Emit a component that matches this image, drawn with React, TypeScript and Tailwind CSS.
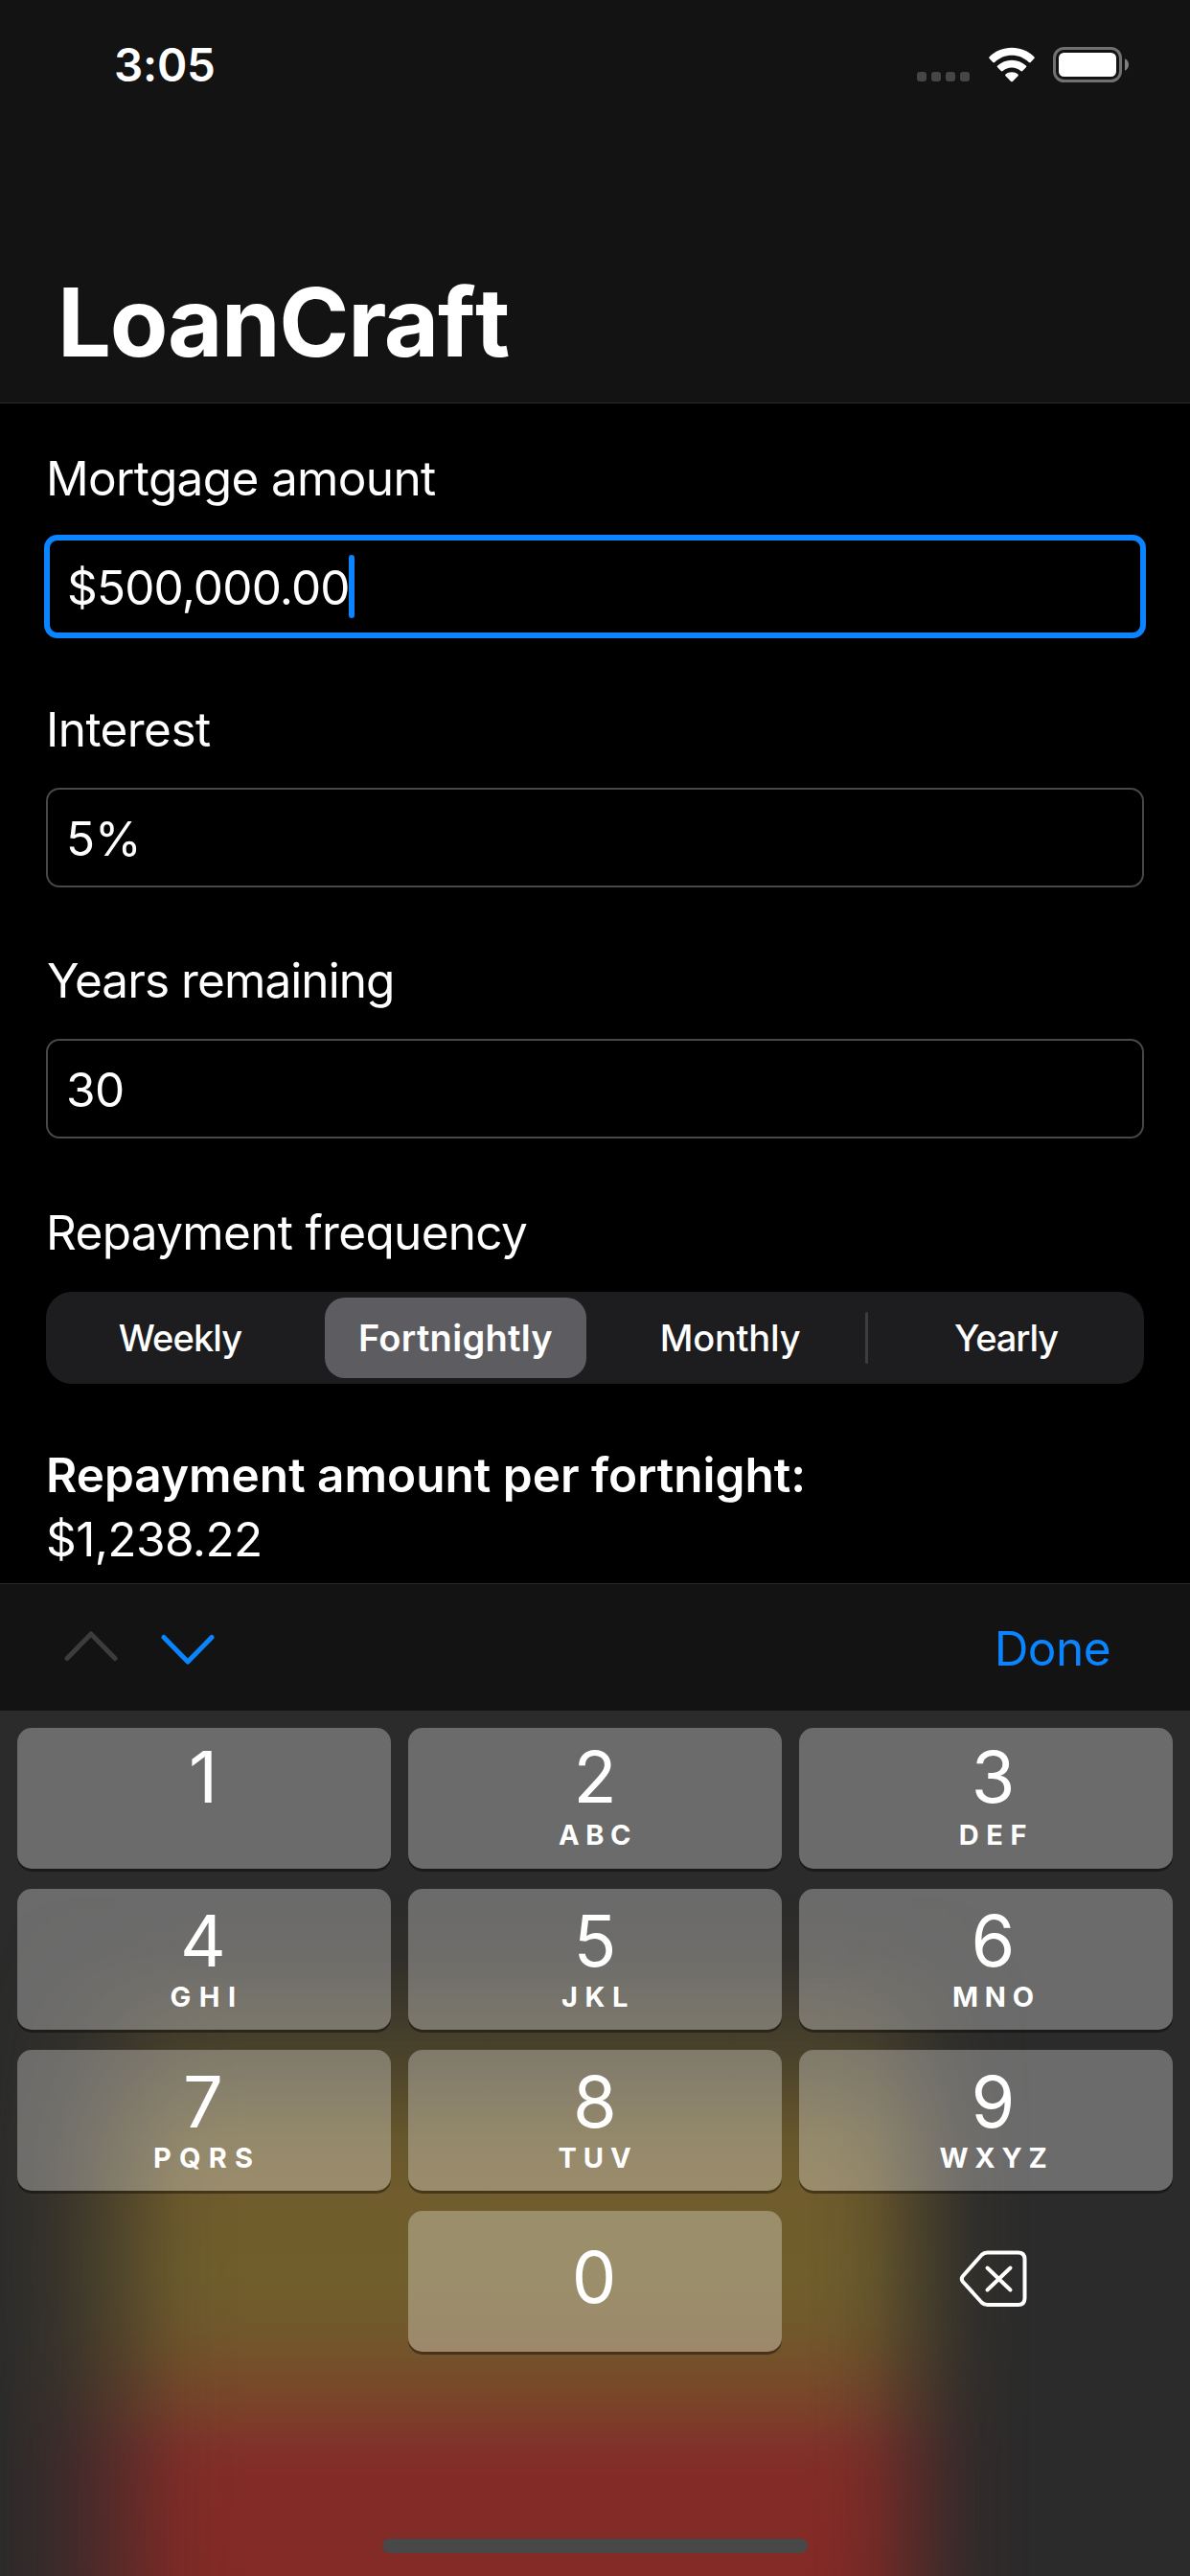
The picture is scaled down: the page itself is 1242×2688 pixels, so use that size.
import type { ReactNode } from "react";

type FieldProps = {
  label: string;
  labelClass: string;
  value: string;
  valueClass: string;
  focused?: boolean;
};

type KeyData = {
  digit: string;
  letters?: string;
  tracking?: string;
};

function StatusBar() {
  return (
    <div className="flex h-[132px] items-start justify-between pt-[38px] pr-[62px] pl-[119px]">
      <span className="text-[47.5px] leading-[60px] font-semibold tracking-[-0.23px]">3:05</span>
      <div className="flex items-start">
        <div className="mt-[37px] flex gap-[5px]">
          {[0, 1, 2, 3].map((dot) => (
            <span key={dot} className="h-[10px] w-[10px] rounded-[3px] bg-[#464646]" />
          ))}
        </div>
        <svg className="mt-[11px] ml-[19px]" width="50" height="37" viewBox="0 0 50 37" fill="white">
          <path d="M25 0.7C34 0.7 42.300 4.200 48.300 10.200C48.900 10.800 48.900 11.500 48.400 12.100L44.700 15.900C44.100 16.500 43.400 16.400 42.800 15.900C38 11.300 31.800 8.700 25 8.700C18.200 8.700 12 11.300 7.200 15.900C6.600 16.400 5.900 16.500 5.300 15.900L1.600 12.100C1.100 11.500 1.100 10.800 1.700 10.200C7.700 4.200 16 0.700 25 0.700Z" />
          <path d="M25 13.700C30.700 13.700 36 15.900 39.900 19.500C40.500 20.100 40.500 20.700 39.900 21.300L36.200 25C35.600 25.600 34.900 25.500 34.300 25C31.800 22.800 28.500 21.500 25 21.500C21.500 21.500 18.200 22.800 15.700 25C15.100 25.500 14.400 25.600 13.800 25L10.100 21.300C9.500 20.700 9.500 20.100 10.100 19.500C14 15.900 19.300 13.700 25 13.700Z" />
          <path d="M25 26.300C27.500 26.300 29.700 27.100 31.400 28.500C32 29 32 29.700 31.500 30.200L25.900 35.900C25.300 36.500 24.700 36.500 24.100 35.900L18.500 30.200C18 29.700 18 29 18.600 28.500C20.300 27.100 22.500 26.300 25 26.300Z" />
        </svg>
        <svg className="mt-[11px] ml-[18px]" width="81" height="38" viewBox="0 0 81 38">
          <rect x="1.500" y="1.500" width="69" height="34" rx="10" fill="none" stroke="#717171" strokeWidth="3" />
          <rect x="6" y="6" width="60" height="25" rx="5.500" fill="white" />
          <path d="M75 12.200C77.400 13.200 79 15.700 79 18.500C79 21.300 77.400 23.800 75 24.800Z" fill="#808080" />
        </svg>
      </div>
    </div>
  );
}

function Field({ label, labelClass, value, valueClass, focused = false }: FieldProps) {
  return (
    <div className="mb-[67px] flex flex-col gap-[31px]">
      <div className={`h-[60px] text-[49.5px] leading-[60px] ${labelClass}`}>{label}</div>
      <div
        className={
          focused
            ? "-m-[2px] flex h-[108px] items-start rounded-[14px] border-[6px] border-[#0a84ff] pt-[15px] pl-[18px]"
            : "flex h-[104px] items-start rounded-[14px] border-2 border-[#484848] pt-[21px] pl-[19px]"
        }
      >
        <span className={`text-[49.5px] leading-[60px] ${focused ? "mt-[4px]" : ""} ${valueClass}`}>{value}</span>
        {focused && <span className="-ml-[1px] h-[66px] w-[6px] rounded-[3px] bg-[#0a84ff]" />}
      </div>
    </div>
  );
}

function Segment({ children, className = "" }: { children: ReactNode; className?: string }) {
  return (
    <div className={`flex h-[84px] items-center justify-center pt-[1px] text-[38px] font-medium ${className}`}>
      {children}
    </div>
  );
}

function Key({ data, firstRow = false, shift }: { data: KeyData; firstRow?: boolean; shift: string }) {
  return (
    <div
      className={`flex h-[147px] flex-col items-center rounded-[15px] bg-white/30 shadow-[0_3px_0_rgba(0,0,0,0.38)] ${
        !data.letters && !firstRow ? "pt-[39px]" : firstRow ? "pt-[21px]" : "pt-[24px]"
      } ${shift}`}
    >
      <span className="h-[60px] text-[74px] leading-[60px]">{data.digit}</span>
      {data.letters && (
        <span
          className={`h-[30px] text-[29px] leading-[30px] font-bold ${firstRow ? "mt-[16px]" : "mt-[14px]"} ${data.tracking}`}
        >
          {data.letters}
        </span>
      )}
    </div>
  );
}

const keys: KeyData[] = [
  { digit: "1" },
  { digit: "2", letters: "ABC", tracking: "tracking-[6.6px] pl-[6px]" },
  { digit: "3", letters: "DEF", tracking: "tracking-[7.6px] pl-[7px]" },
  { digit: "4", letters: "GHI", tracking: "tracking-[8.500px] pl-[8px]" },
  { digit: "5", letters: "JKL", tracking: "tracking-[7.6px] pl-[7px]" },
  { digit: "6", letters: "MNO", tracking: "tracking-[6.9px] pl-[7px]" },
  { digit: "7", letters: "PQRS", tracking: "tracking-[8.2px] pl-[8px]" },
  { digit: "8", letters: "TUV", tracking: "tracking-[6.9px] pl-[6px]" },
  { digit: "9", letters: "WXYZ", tracking: "tracking-[6.8px] pl-[7px]" },
];

const columnShift = ["pr-[2px]", "pr-0", "pl-[15px]"];

function Keypad() {
  return (
    <div className="relative h-[903px] overflow-hidden bg-[#2b2b2b]">
      <div className="absolute inset-0 bg-[linear-gradient(to_bottom,rgba(112,94,44,0)_190px,rgba(112,94,44,0.07)_255px,rgba(112,94,44,0.37)_335px,rgba(112,94,44,0.52)_375px,rgba(112,94,44,0.85)_445px,#705c2c_500px,#705e2c_590px,#715a2c_635px,#74532a_670px,#77492a_705px,#7b3f29_735px,#80332a_765px,#832c27_800px,#832a26_903px)] [mask-image:linear-gradient(to_right,rgba(0,0,0,0.02)_0px,rgba(0,0,0,0.1)_33px,rgba(0,0,0,0.19)_60px,rgba(0,0,0,0.31)_85px,rgba(0,0,0,0.54)_125px,rgba(0,0,0,0.73)_155px,rgba(0,0,0,0.9)_187px,rgba(0,0,0,0.98)_225px,#000_260px,#000_840px,rgba(0,0,0,0.96)_872px,rgba(0,0,0,0.82)_911px,rgba(0,0,0,0.52)_950px,rgba(0,0,0,0.24)_990px,rgba(0,0,0,0.08)_1022px,transparent_1075px)]" />
      <div className="relative grid grid-cols-3 gap-x-[18px] gap-y-[21px] px-[18px] pt-[18px]">
        {keys.map((key, index) => (
          <Key key={key.digit} data={key} firstRow={index < 3} shift={columnShift[index % 3]} />
        ))}
        <div />
        <Key data={{ digit: "0" }} shift="pr-[2px]" />
        <div className="flex justify-center pt-[40px] pl-[16px]">
          <svg
            width="72"
            height="62"
            viewBox="0 0 72 62"
            fill="none"
            stroke="white"
            strokeWidth="4"
            strokeLinecap="round"
            strokeLinejoin="round"
          >
            <path d="M29.500 3.500H61.500Q68.500 3.500 68.500 10.500V51Q68.500 58 61.500 58H29.500Q26 58 23.500 55.500L4 34Q1.500 31 4 28L23.500 6Q26 3.500 29.500 3.500Z" />
            <path d="M29.500 19.500L53.500 42.500M53.500 19.500L29.500 42.500" />
          </svg>
        </div>
      </div>
      <div className="absolute bottom-[24px] left-[399px] h-[15px] w-[444px] rounded-full bg-[#484848]" />
    </div>
  );
}

export default function App() {
  return (
    <div className="h-[2688px] w-[1242px] overflow-hidden bg-black font-['Inter',sans-serif] text-white">
      <header className="h-[421px] border-b border-[#2b2b2b] bg-[#131313]">
        <StatusBar />
        <h1 className="pt-[144px] pl-[60px] text-[99px] leading-[120px] font-bold tracking-[-1.35px]">
          LoanCraf<span className="ml-[1px]">t</span>
        </h1>
      </header>

      <main className="h-[1231px] px-[48px] pt-[48px]">
        <Field
          label="Mortgage amount"
          labelClass="tracking-[-0.65px]"
          value="$500,000.00"
          valueClass="tracking-[-0.84px]"
          focused
        />
        <Field label="Interest" labelClass="tracking-[-0.56px]" value="5%" valueClass="tracking-[-0.1px]" />
        <Field label="Years remaining" labelClass="tracking-[-0.92px] pl-[1px]" value="30" valueClass="tracking-[-0.57px]" />

        <div className="h-[60px] pt-px text-[49.5px] leading-[60px] tracking-[-0.68px]">Repayment frequency</div>
        <div className="mt-[33px] flex h-[96px] items-center rounded-[27px] bg-[#1d1d1f]">
          <Segment className="w-[282px] pr-[2px] tracking-[-0.9px]">Weekly</Segment>
          <Segment className="ml-[9px] w-[273px] rounded-[21px] bg-[#5d5c61] font-semibold tracking-[0.3px]">
            Fortnightly
          </Segment>
          <Segment className="ml-[9px] w-[282px] tracking-[-0.19px]">Monthly</Segment>
          <div className="h-[54px] w-[3px] rounded-full bg-[#3d3d40]" />
          <Segment className="w-[288px] tracking-[-1.1px]">Yearly</Segment>
        </div>

        <div className="mt-[65px] text-[49.5px] leading-[60px] font-semibold">Repayment amount per fortnight:</div>
        <div className="mt-[7px] text-[49.5px] leading-[60px] tracking-[-0.6px]">$1,238.22</div>
      </main>

      <div className="flex h-[133px] items-start justify-between border-t border-[#2b2b2b] bg-[#131313] pr-[83px] pl-[67px]">
        <div className="flex gap-[45px] pt-[48px]">
          <svg width="56" height="37" viewBox="0 0 56 37" fill="none" stroke="#3c3c3c" strokeWidth="5" strokeLinecap="round" strokeLinejoin="round">
            <path d="M3 29.500L28 4L53 29.500" />
          </svg>
          <svg width="56" height="37" viewBox="0 0 56 37" fill="none" stroke="#0a84ff" strokeWidth="5" strokeLinecap="round" strokeLinejoin="round">
            <path d="M3 7.500L28 33L53 7.500" />
          </svg>
        </div>
        <span className="mt-[37px] text-[49.5px] leading-[60px] tracking-[-0.55px] text-[#0a84ff]">Done</span>
      </div>

      <Keypad />
    </div>
  );
}
